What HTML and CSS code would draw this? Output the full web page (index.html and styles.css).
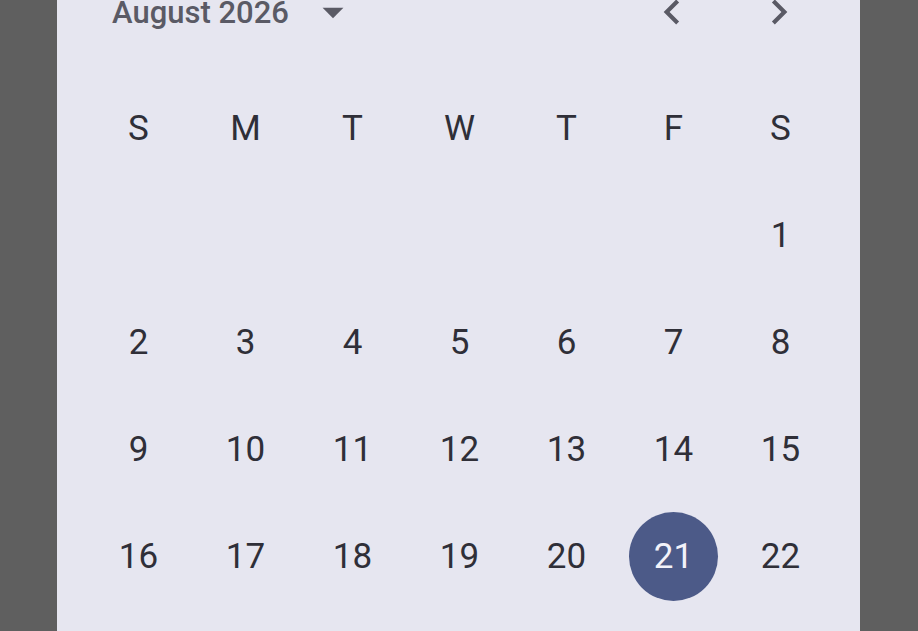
FILE: index.html
```html
<!DOCTYPE html>
<html lang="en">
<head>
<meta charset="utf-8">
<title>Date picker</title>
<link rel="stylesheet" href="styles.css">
</head>
<body>
<div class="stage">
  <div class="panel">
    <div class="header">
      <div class="month">
        <span class="month-label">August 2026</span>
        <svg class="icon drop" viewBox="0 0 24 24" width="50" height="50"><path d="M7 10l5 5 5-5z"/></svg>
      </div>
      <div class="nav">
        <svg class="icon" viewBox="0 0 24 24" width="50" height="50"><path d="M15.41 7.41L14 6l-6 6 6 6 1.41-1.41L10.83 12z"/></svg>
        <svg class="icon" viewBox="0 0 24 24" width="50" height="50"><path d="M10 6L8.59 7.41 13.17 12l-4.58 4.59L10 18l6-6z"/></svg>
      </div>
    </div>
    <div class="grid">
      <div class="cell">S</div><div class="cell">M</div><div class="cell">T</div><div class="cell">W</div><div class="cell">T</div><div class="cell">F</div><div class="cell">S</div>
      <div class="cell"></div><div class="cell"></div><div class="cell"></div><div class="cell"></div><div class="cell"></div><div class="cell"></div><div class="cell">1</div>
      <div class="cell">2</div><div class="cell">3</div><div class="cell">4</div><div class="cell">5</div><div class="cell">6</div><div class="cell">7</div><div class="cell">8</div>
      <div class="cell">9</div><div class="cell">10</div><div class="cell">11</div><div class="cell">12</div><div class="cell">13</div><div class="cell">14</div><div class="cell">15</div>
      <div class="cell">16</div><div class="cell">17</div><div class="cell">18</div><div class="cell">19</div><div class="cell">20</div><div class="cell"><span class="selected">21</span></div><div class="cell">22</div>
    </div>
  </div>
</div>
</body>
</html>
```
FILE: styles.css
```css
html, body {
  margin: 0;
  padding: 0;
  height: 100%;
  overflow: hidden;
}
body {
  background: #5f5f5f;
  font-family: Roboto, "Noto Sans", "Liberation Sans", sans-serif;
}
.stage {
  display: flex;
  height: 100%;
  padding-left: 57px;
}
.panel {
  width: 803px;
  background: #e6e6f0;
  box-sizing: border-box;
  padding: 0 56px 0 28px;
  display: flex;
  flex-direction: column;
}
.header {
  height: 26px;
  display: flex;
  align-items: center;
  padding-left: 27px;
}
.month {
  display: flex;
  align-items: center;
}
.month-label {
  font-size: 31px;
  line-height: 26px;
  font-weight: 500;
  color: #5a5a65;
}
.icon {
  fill: #5a5a65;
  flex: none;
  margin-top: -2px;
}
.drop {
  margin-left: 19px;
}
.nav {
  margin-left: auto;
  display: flex;
  gap: 57px;
}
.grid {
  margin-top: 49px;
  display: grid;
  grid-template-columns: repeat(7, 107px);
  grid-auto-rows: 107px;
}
.cell {
  display: flex;
  align-items: center;
  justify-content: center;
  font-size: 35px;
  color: #2f2f38;
}
.selected {
  width: 89px;
  height: 89px;
  border-radius: 50%;
  background: #4c5a88;
  color: #f2f2fa;
  display: flex;
  align-items: center;
  justify-content: center;
}
```
